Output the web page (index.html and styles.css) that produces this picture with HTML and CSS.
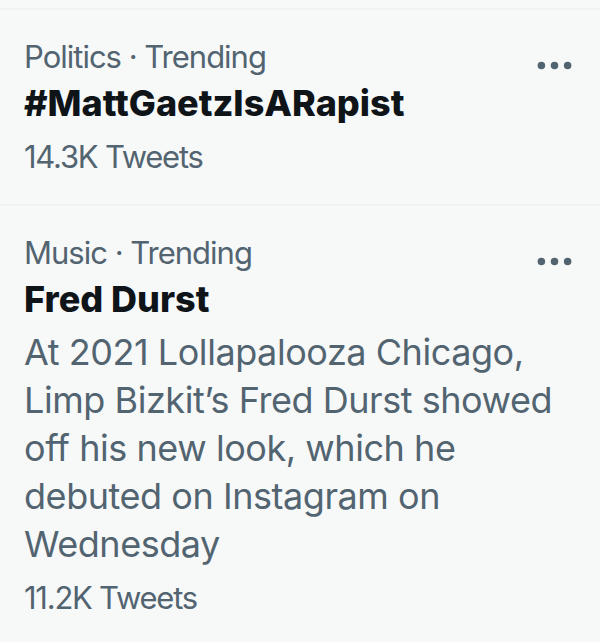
FILE: index.html
```html
<!DOCTYPE html>
<html lang="en">
<head>
<meta charset="utf-8">
<title>Trends</title>
<link rel="stylesheet" href="styles.css">
</head>
<body>
<div class="trend-list">
  <div class="trend">
    <div class="meta-row">
      <div class="meta">Politics · Trending</div>
      <div class="more" aria-label="More">
        <svg viewBox="0 0 24 24" width="45" height="45"><circle cx="5" cy="12" r="2"/><circle cx="12" cy="12" r="2"/><circle cx="19" cy="12" r="2"/></svg>
      </div>
    </div>
    <div class="title">#MattGaetzIsARapist</div>
    <div class="count">14.3K Tweets</div>
  </div>
  <div class="trend">
    <div class="meta-row">
      <div class="meta">Music · Trending</div>
      <div class="more" aria-label="More">
        <svg viewBox="0 0 24 24" width="45" height="45"><circle cx="5" cy="12" r="2"/><circle cx="12" cy="12" r="2"/><circle cx="19" cy="12" r="2"/></svg>
      </div>
    </div>
    <div class="title">Fred Durst</div>
    <div class="desc">At 2021 Lollapalooza Chicago, Limp Bizkit’s Fred Durst showed off his new look, which he debuted on Instagram on Wednesday</div>
    <div class="count">11.2K Tweets</div>
  </div>
</div>
</body>
</html>
```

FILE: styles.css
```css
html, body {
  margin: 0;
  padding: 0;
  background: #f7f9f9;
}

body {
  font-family: Inter, "Noto Sans", sans-serif;
  color: #0f1419;
  width: 600px;
  height: 642px;
  overflow: hidden;
}

.trend-list {
  padding-top: 8px;
}

.trend {
  display: flex;
  flex-direction: column;
  border-top: 2px solid #eff3f4;
  padding: 28px 24px 28px 24px;
}

.meta-row {
  display: flex;
  align-items: flex-start;
  justify-content: space-between;
}

.meta {
  font-size: 31px;
  line-height: 38px;
  letter-spacing: -1px;
  color: #536471;
}

.title {
  font-size: 36px;
  line-height: 48px;
  font-weight: 800;
  color: #0f1419;
  margin-top: 3px;
}

.desc {
  font-size: 36px;
  line-height: 48px;
  letter-spacing: -0.45px;
  color: #536471;
  margin-top: 5px;
}

.count {
  font-size: 31px;
  line-height: 38px;
  letter-spacing: -1.25px;
  color: #536471;
  margin-top: 11px;
}

.more {
  display: flex;
  width: 45px;
  height: 45px;
  margin: 5px -0.5px -12px 0;
  fill: #536471;
}

.more svg {
  display: block;
}
```
